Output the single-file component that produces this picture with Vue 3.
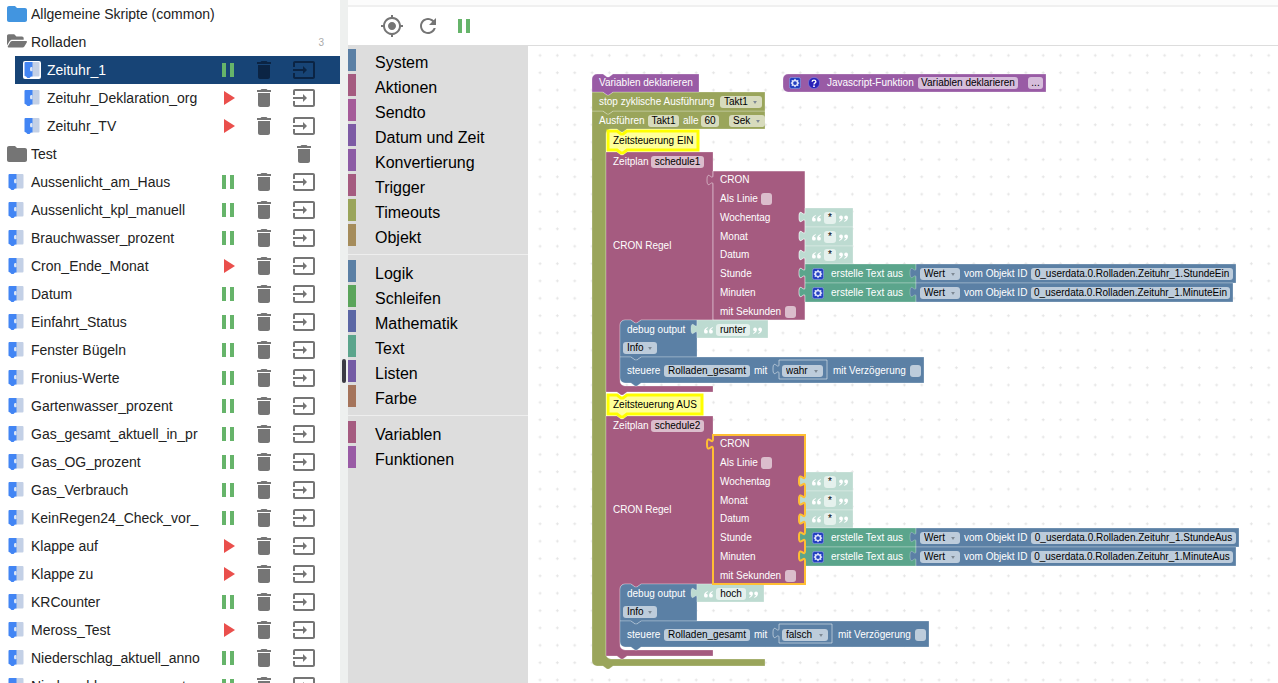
<script setup>
import { ref } from 'vue'

const ICONS = {
  pause: 'M6 19h4V5H6v14zm8-14v14h4V5h-4z',
  play: 'M8 5v14l11-7z',
  trash: 'M6 19c0 1.1.9 2 2 2h8c1.1 0 2-.9 2-2V7H6v12zM19 4h-3.5l-1-1h-5l-1 1H5v2h14V4z',
  input: 'M21 3.01H3c-1.1 0-2 .9-2 2V9h2V4.99h18v14.03H3V15H1v4.01c0 1.1.9 1.98 2 1.98h18c1.1 0 2-.88 2-1.98v-14c0-1.11-.9-2-2-2zM11 16l4-4-4-4v3H1v2h10v3z',
  folder: 'M10 4H4c-1.1 0-1.99.9-1.99 2L2 18c0 1.1.9 2 2 2h16c1.1 0 2-.9 2-2V8c0-1.1-.9-2-2-2h-8l-2-2z',
  locate: 'M12 8c-2.21 0-4 1.79-4 4s1.79 4 4 4 4-1.79 4-4-1.79-4-4-4zm8.94 3c-.46-4.17-3.77-7.48-7.94-7.94V1h-2v2.06C6.83 3.52 3.52 6.83 3.06 11H1v2h2.06c.46 4.17 3.77 7.48 7.94 7.94V23h2v-2.06c4.17-.46 7.48-3.77 7.94-7.94H23v-2h-2.06zM12 19c-3.87 0-7-3.13-7-7s3.13-7 7-7 7 3.13 7 7-3.13 7-7 7z',
  refresh: 'M17.65 6.35C16.2 4.9 14.21 4 12 4c-4.42 0-7.99 3.58-7.99 8s3.57 8 7.99 8c3.73 0 6.84-2.55 7.73-6h-2.08c-.82 2.33-3.04 4-5.65 4-3.31 0-6-2.69-6-6s2.69-6 6-6c1.66 0 3.14.69 4.22 1.78L13 11h7V4l-2.35 2.35z'
}

const selected = ref('Zeituhr_1')
const script = (name, running, nested = false) => ({ kind: 'script', name, running, nested })
const entries = [
  { kind: 'folder', name: 'Allgemeine Skripte (common)', tone: 'azure' },
  { kind: 'open', name: 'Rolladen', count: 3 },
  script('Zeituhr_1', true, true),
  script('Zeituhr_Deklaration_org', false, true),
  script('Zeituhr_TV', false, true),
  { kind: 'folder', name: 'Test', tone: 'grey', removable: true },
  script('Aussenlicht_am_Haus', true),
  script('Aussenlicht_kpl_manuell', true),
  script('Brauchwasser_prozent', true),
  script('Cron_Ende_Monat', false),
  script('Datum', true),
  script('Einfahrt_Status', true),
  script('Fenster Bügeln', true),
  script('Fronius-Werte', true),
  script('Gartenwasser_prozent', true),
  script('Gas_gesamt_aktuell_in_pr', true),
  script('Gas_OG_prozent', true),
  script('Gas_Verbrauch', true),
  script('KeinRegen24_Check_vor_', true),
  script('Klappe auf', false),
  script('Klappe zu', false),
  script('KRCounter', true),
  script('Meross_Test', false),
  script('Niederschlag_aktuell_anno', true),
  script('Niederschlag_gegenwert', true)
]

const categories = [
  [['System', '#5b80a5'], ['Aktionen', '#a55b80'], ['Sendto', '#a55b99'], ['Datum und Zeit', '#7d5ba5'],
    ['Konvertierung', '#8c5ba5'], ['Trigger', '#a55b80'], ['Timeouts', '#9aa55b'], ['Objekt', '#a58c5b']],
  [['Logik', '#5b80a5'], ['Schleifen', '#5ba55b'], ['Mathematik', '#5b67a5'], ['Text', '#5ba58c'],
    ['Listen', '#745ba5'], ['Farbe', '#a5745b']],
  [['Variablen', '#a55b80'], ['Funktionen', '#995ba5']]
]

/* Workspace scroll offset: block coordinates minus origin give canvas coordinates. */
const origin = { x: 528, y: 46 }

const BITE = 'l4,3 h2 l4,-3'
const TAB = 'l-4,3 h-2 l-4,-3'
const PLUG = 'c0,-7 -6,6 -6,-5 s6,2 6,-5'
const SOCKET = 'c0,7 -6,-6 -6,5 s6,-2 6,5'

function stack(x, y, w, h, head = false) {
  const start = head ? `M${x},${y + 5} a5,5 0 0 1 5,-5` : `M${x},${y}`
  return `${start} H${x + 11} ${BITE} H${x + w} V${y + h} H${x + 21} ${TAB} H${x} Z`
}
function last(x, y, w, h) {
  return `M${x},${y} H${x + 11} ${BITE} H${x + w} V${y + h} H${x + 21} ${TAB} H${x + 5} a5,5 0 0 1 -5,-5 Z`
}
function wrap(x, y, w, innerTop, innerEnd, end, round) {
  const i = x + 14
  const corner = round ? `H${x + 5} a5,5 0 0 1 -5,-5` : `H${x}`
  return `M${x},${y} H${x + 11} ${BITE} H${x + w} V${innerTop} H${i + 21} ${TAB} H${i + 5} a5,5 0 0 0 -5,5 ` +
    `V${innerEnd - 5} a5,5 0 0 0 5,5 H${x + w} V${end} H${x + 21} ${TAB} ${corner} Z`
}
function value(x, y, w, h) {
  return `M${x},${y} H${x + w} V${y + h} H${x} V${y + 14} ${PLUG} Z`
}
function cron(x, y, w, h) {
  const sockets = [37, 56, 75, 93, 112].map((o) => `V${y + o + 4} ${SOCKET}`).join(' ')
  return `M${x},${y} H${x + w} ${sockets} V${y + h} H${x} V${y + 14} ${PLUG} Z`
}

const OLIVE = '#9aa55b'
const PLUM = '#a55b80'
const PURPLE = '#995ba5'
const BLUE = '#5b80a5'
const GREEN = '#5ba58c'
const MINT = '#bddbd1'

function scheduleShapes(dy, o) {
  const y = (n) => n + dy
  return [
    { d: wrap(606, y(152), 107, y(320), y(386), y(392), false), fill: PLUM },
    { d: `M608,${y(131)} H617 ${BITE} H${o.note - 2} V${y(150)} H627 ${TAB} H608 Z`, fill: '#ffff99', cls: 'note' },
    { d: cron(713, y(171), 92, 149), fill: PLUM },
    ...[208, 227, 246].map((r, n) => ({ d: value(805, y(r), 48, n === 2 ? 18 : 19), fill: MINT })),
    { d: value(805, y(264), 111, 19), fill: GREEN },
    { d: value(805, y(283), 111, 19), fill: GREEN },
    { d: value(916, y(264), o.hour - 916, 19), fill: BLUE },
    { d: value(916, y(283), o.minute - 916, 19), fill: BLUE },
    { d: stack(620, y(320), 77, 37, true), fill: BLUE },
    { d: value(697, y(320), o.text - 697, 18), fill: MINT },
    { d: last(620, y(357), o.steer - 620, 26), fill: BLUE },
    { d: value(779, y(360), o.bool - 779, 19), fill: BLUE, cls: 'inset' },
    { d: cron(713, y(171), 92, 149), fill: 'none', cls: o.active ? 'active' : '' }
  ]
}

const shapes = [
  { d: wrap(592, 111, 173, 129, 659, 666, true), fill: OLIVE },
  { d: stack(592, 92, 173, 19), fill: OLIVE },
  { d: stack(592, 74, 107, 18, true), fill: PURPLE },
  { d: 'M788,74 H1046 V92 H788 a5,5 0 0 1 -5,-5 V79 a5,5 0 0 1 5,-5 Z', fill: PURPLE },
  ...scheduleShapes(0, { note: 700, hour: 1236, minute: 1233, text: 768, steer: 924, bool: 827 }),
  ...scheduleShapes(264, { note: 704, hour: 1239, minute: 1236, text: 764, steer: 929, bool: 832, active: true })
]

const label = (text, w) => ({ k: 'label', text, w })
const field = (text, w) => ({ k: 'field', text, w })
const pick = (text, w) => ({ k: 'pick', text, w })
const check = { k: 'check' }
const gear = { k: 'gear' }
const open = { k: 'open' }
const close = { k: 'close' }

function scheduleRows(dy, o) {
  const rows = [
    { x: 613, y: 141, dark: true, items: [label(o.note)] },
    { x: 613, y: 162, tone: 'plum', items: [label('Zeitplan', 34), field(o.name, 53)] },
    { x: 613, y: 246, items: [label('CRON Regel')] },
    { x: 720, y: 180, items: [label('CRON')] },
    { x: 720, y: 199, tone: 'plum', items: [label('Als Linie', 37), check] },
    { x: 720, y: 218, items: [label('Wochentag')] },
    { x: 720, y: 237, items: [label('Monat')] },
    { x: 720, y: 255, items: [label('Datum')] },
    { x: 720, y: 274, items: [label('Stunde')] },
    { x: 720, y: 293, items: [label('Minuten')] },
    { x: 720, y: 312, tone: 'plum', items: [label('mit Sekunden', 61), check] },
    ...[218, 237, 255].map((y) => ({ x: 812, y, tone: 'mint', items: [open, field('*', 12), close] })),
    { x: 812, y: 274, items: [gear, label('erstelle Text aus')] },
    { x: 812, y: 293, items: [gear, label('erstelle Text aus')] },
    { x: 920, y: 274, tone: 'blue', items: [pick('Wert', 40), label('vom Objekt ID', 63), field('0_userdata.0.Rolladen.Zeituhr_1.' + o.hour, o.hourW)] },
    { x: 920, y: 293, tone: 'blue', items: [pick('Wert', 40), label('vom Objekt ID', 63), field('0_userdata.0.Rolladen.Zeituhr_1.' + o.minute, o.minuteW)] },
    { x: 627, y: 330, items: [label('debug output')] },
    { x: 704, y: 330, tone: 'mint', items: [open, field(o.text, o.textW), close] },
    { x: 623, y: 348, tone: 'blue', items: [pick('Info', 34)] },
    { x: 627, y: 371, tone: 'blue', items: [label('steuere', 33), field('Rolladen_gesamt', 86), label('mit')] },
    { x: 782, y: 371, tone: 'blue', items: [pick(o.bool, o.boolW)] },
    { x: o.delayX, y: 371, tone: 'blue', items: [label('mit Verzögerung', 73), check] }
  ]
  return rows.map((r) => ({ ...r, y: r.y + dy }))
}

const rows = [
  { x: 599, y: 83, items: [label('Variablen deklarieren')] },
  { x: 599, y: 102, tone: 'olive', items: [label('stop zyklische Ausführung', 117), pick('Takt1', 42)] },
  { x: 599, y: 121, tone: 'olive', items: [label('Ausführen', 45), field('Takt1', 31), label('alle', 14), field('60', 18), { k: 'space' }, pick('Sek', 36)] },
  { x: 789, y: 83, tone: 'purple', items: [gear, { k: 'help' }, label('Javascript-Funktion', 87), field('Variablen deklarieren', 100), { k: 'space' }, { k: 'more' }] },
  ...scheduleRows(0, { note: 'Zeitsteuerung EIN', name: 'schedule1', hour: 'StundeEin', hourW: 202, minute: 'MinuteEin', minuteW: 199, text: 'runter', textW: 34, bool: 'wahr', boolW: 41, delayX: 833 }),
  ...scheduleRows(264, { note: 'Zeitsteuerung AUS', name: 'schedule2', hour: 'StundeAus', hourW: 205, minute: 'MinuteAus', minuteW: 202, text: 'hoch', textW: 30, bool: 'falsch', boolW: 46, delayX: 838 })
].map((row, r) => ({
  ...row,
  items: row.items.map((it, i) => ({
    ...it,
    id: `f${r}-${i}`,
    target: it.k === 'label' && row.items[i + 1] && ['field', 'pick', 'check'].includes(row.items[i + 1].k) ? `f${r}-${i + 1}` : null
  }))
}))

const place = (row) => ({ left: `${row.x - origin.x}px`, top: `${row.y - origin.y - 6}px` })
const width = (it) => (it.w ? { width: `${it.w}px` } : null)
</script>

<template>
  <div class="app">
    <nav class="tree" aria-label="Skripte">
      <ul>
        <li
          v-for="e in entries"
          :key="e.name"
          :class="{ nested: e.nested, current: e.name === selected }"
        >
          <svg v-if="e.kind === 'folder'" class="folder" :class="e.tone" viewBox="2 2 20 20"><path :d="ICONS.folder" /></svg>
          <svg v-else-if="e.kind === 'open'" class="folder grey" viewBox="0 0 576 576">
            <path d="M572.694 292.093L500.27 416.248A63.997 63.997 0 0 1 444.989 448H45.025c-18.523 0-30.064-20.093-20.731-36.093l72.424-124.155A64 64 0 0 1 152 256h399.964c18.523 0 30.064 20.093 20.73 36.093zM152 224h328v-48c0-26.51-21.49-48-48-48H272l-64-64H48C21.49 64 0 85.49 0 112v278.046l69.077-118.418C86.214 242.25 117.989 224 152 224z" />
          </svg>
          <svg v-else class="blockly" viewBox="0 0 18 18">
            <path d="M8 1h7.500a1 1 0 0 1 1 1v12.500a1 1 0 0 1-1 1H8z" fill="#c3d0e6" />
            <path d="M2.500 1H9.500V15.500H8l-1.500 1.500h-2L3 15.500l-1.500-.8V2a1 1 0 0 1 1-1z" fill="#4285f4" />
            <path d="M9.500 6.500c-2-1-2.500 0-2.500 1.700s.5 2.700 2.500 1.700z" fill="#dbe5f6" />
          </svg>
          <button class="name" type="button" @click="e.kind === 'script' && (selected = e.name)">{{ e.name }}</button>
          <span v-if="e.count" class="count">{{ e.count }}</span>
          <span v-if="e.kind === 'script'" class="actions">
            <button type="button" :aria-label="e.running ? 'Pause' : 'Start'" :class="e.running ? 'run' : 'stop'">
              <svg viewBox="0 0 24 24"><path :d="e.running ? ICONS.pause : ICONS.play" /></svg>
            </button>
            <button type="button" aria-label="Löschen"><svg viewBox="0 0 24 24"><path :d="ICONS.trash" /></svg></button>
            <button type="button" class="go" aria-label="Öffnen"><svg viewBox="0 0 24 24"><path :d="ICONS.input" /></svg></button>
          </span>
          <span v-if="e.removable" class="actions">
            <button type="button" aria-label="Löschen"><svg viewBox="0 0 24 24"><path :d="ICONS.trash" /></svg></button>
          </span>
        </li>
      </ul>
    </nav>

    <div class="splitter"><span></span></div>

    <main class="editor">
      <div class="strip"></div>
      <header class="toolbar">
        <button type="button" aria-label="Lokalisieren"><svg viewBox="0 0 24 24"><path :d="ICONS.locate" /></svg></button>
        <button type="button" aria-label="Neu starten"><svg viewBox="0 0 24 24"><path :d="ICONS.refresh" /></svg></button>
        <button type="button" aria-label="Pause" class="run"><svg viewBox="0 0 24 24"><path :d="ICONS.pause" /></svg></button>
      </header>

      <div class="work">
        <aside class="toolbox">
          <ul v-for="(group, g) in categories" :key="g">
            <li v-for="[name, color] in group" :key="name">
              <i :style="{ background: color }"></i><button type="button">{{ name }}</button>
            </li>
          </ul>
        </aside>

        <section class="canvas" aria-label="Arbeitsbereich">
          <svg class="shapes" aria-hidden="true">
            <defs>
              <pattern id="dots" x="3" y="1" width="17.35" height="17.35" patternUnits="userSpaceOnUse">
                <path d="M7.500 8.500h3M9 7v3" stroke="#e4e4e4" stroke-width="1" />
              </pattern>
            </defs>
            <rect width="100%" height="100%" fill="url(#dots)" />
            <g :transform="`translate(${-origin.x},${-origin.y})`">
              <path v-for="(s, i) in shapes" :key="i" class="shape" :class="s.cls" :d="s.d" :fill="s.fill" />
            </g>
          </svg>

          <div v-for="(row, r) in rows" :key="r" class="row" :class="[row.tone, { dark: row.dark }]" :style="place(row)">
            <template v-for="it in row.items" :key="it.id">
              <label v-if="it.k === 'label' && it.target" :for="it.target" :style="width(it)">{{ it.text }}</label>
              <span v-else-if="it.k === 'label'" class="text" :style="width(it)">{{ it.text }}</span>
              <input v-else-if="it.k === 'field'" :id="it.id" type="text" :value="it.text" :aria-label="it.text" :style="width(it)" />
              <span v-else-if="it.k === 'pick'" class="pick" :style="width(it)">
                <select :id="it.id" :aria-label="it.text"><option>{{ it.text }}</option></select>
                <svg viewBox="0 0 5 4"><path d="M0 0h5L2.500 4z" /></svg>
              </span>
              <input v-else-if="it.k === 'check'" :id="it.id" type="checkbox" />
              <svg v-else-if="it.k === 'gear'" class="mutator" viewBox="0 0 16 16">
                <rect x=".5" y=".5" width="15" height="15" rx="3" fill="#2440c0" stroke="#8f9de0" />
                <path d="M8 2l1.700 2.200 2.800-.2-.3 2.500L14 8l-1.800 1.500.3 2.500-2.800-.2L8 14l-1.700-2.200-2.800.2.300-2.500L2 8l1.800-1.500L3.500 4l2.800.2z" fill="#dfe4fb" />
                <circle cx="8" cy="8" r="2.500" fill="#2440c0" />
              </svg>
              <svg v-else-if="it.k === 'help'" class="mutator" viewBox="0 0 16 16">
                <circle cx="8" cy="8" r="7.500" fill="#2a22b8" stroke="#7f7bd8" />
                <path d="M5.500 6.200C5.500 3.400 10.500 3.400 10.500 6.200 10.500 8 8 7.800 8 10" fill="none" stroke="#fff" stroke-width="1.800" />
                <circle cx="8" cy="12.200" r="1.200" fill="#fff" />
              </svg>
              <svg v-else-if="it.k === 'open'" class="quote" viewBox="1 2 8 8">
                <path d="M4.500 3.200C2.300 3.700 1 5 1 7a1.700 1.700 0 1 0 1.800-1.700C2.900 4.500 3.600 4 4.500 3.700zM9 3.200C6.800 3.700 5.500 5 5.500 7a1.700 1.700 0 1 0 1.800-1.700C7.400 4.500 8.100 4 9 3.700z" />
              </svg>
              <svg v-else-if="it.k === 'close'" class="quote" viewBox="1 2 8 8">
                <path d="M1 8.800C3.200 8.300 4.500 7 4.500 5a1.700 1.700 0 1 0-1.800 1.700C2.600 7.500 1.900 8 1 8.300zM5.500 8.800C7.700 8.300 9 7 9 5a1.700 1.700 0 1 0-1.800 1.700C7.100 7.500 6.400 8 5.500 8.300z" />
              </svg>
              <button v-else-if="it.k === 'more'" type="button">...</button>
              <i v-else class="space"></i>
            </template>
          </div>
        </section>
      </div>
    </main>
  </div>
</template>

<style>
body {
  overflow: hidden;
}
</style>

<style scoped>
.app {
  display: flex;
  height: 100vh;
  background: #fff;
  font-family: "Liberation Sans", Arial, sans-serif;
  color: #222;
}
ul {
  list-style: none;
  margin: 0;
  padding: 0;
}
button {
  border: 0;
  padding: 0;
  background: none;
  font: inherit;
  color: inherit;
  text-align: left;
}
svg {
  display: block;
  flex: none;
}

/* script tree */
.tree {
  flex: none;
  width: 340px;
  overflow: hidden;
  font-size: 14px;
}
.tree li {
  display: flex;
  align-items: center;
  height: 28px;
  padding: 0 24px 0 7px;
}
.tree li.nested {
  margin-left: 15px;
  padding-left: 8px;
}
.tree li.current {
  background: #174476;
  color: #fff;
}
.folder {
  width: 20px;
  height: 20px;
  margin-right: 4px;
}
.azure {
  fill: #4295e0;
}
.grey {
  fill: #757575;
}
.blockly {
  width: 18px;
  height: 18px;
  margin-right: 6px;
}
.current .blockly {
  border-radius: 2px;
  background: #fff;
}
.name {
  flex: 1;
  min-width: 0;
  overflow: hidden;
  white-space: nowrap;
  line-height: 20px;
}
.count {
  margin-right: -8px;
  font-size: 10px;
  color: #aaa;
}
.actions {
  display: flex;
  gap: 12px;
  margin-left: 13px;
  fill: #757575;
}
.current .actions {
  fill: #0b2444;
}
.actions svg,
.toolbar svg {
  width: 24px;
  height: 24px;
}
.go {
  margin-left: 4px;
}
.run {
  fill: #66b46a;
}
.stop {
  fill: #ea4f4c;
}

/* splitter */
.splitter {
  display: flex;
  flex: none;
  justify-content: center;
  width: 8px;
  padding-top: 359px;
  box-sizing: border-box;
  background: #eef0ef;
}
.splitter span {
  width: 4px;
  height: 24px;
  border-radius: 2px;
  background: #3b3b44;
}

/* editor */
.editor {
  display: flex;
  flex: 1;
  flex-direction: column;
  min-width: 0;
}
.strip {
  height: 5px;
  border-bottom: 2px solid #f0f0f0;
  background: #fcfcfc;
}
.toolbar {
  display: flex;
  gap: 12px;
  padding: 7px 32px;
  border-bottom: 1px solid #ddd;
  fill: #757575;
}
.work {
  display: flex;
  flex: 1;
  min-height: 0;
}
.toolbox {
  flex: none;
  width: 180px;
  padding-top: 3px;
  box-sizing: border-box;
  background: #ddd;
  color: #000;
  font-size: 16px;
}
.toolbox ul + ul {
  margin-top: 8px;
  padding-top: 5px;
  border-top: 1px solid #eee;
}
.toolbox li {
  display: flex;
  align-items: center;
  height: 22px;
  margin-bottom: 3px;
}
.toolbox i {
  width: 8px;
  height: 22px;
  margin-right: 19px;
}
.toolbox button {
  padding-top: 6px;
  line-height: 22px;
}

/* workspace */
.canvas {
  position: relative;
  flex: 1;
  overflow: hidden;
}
.shapes {
  width: 100%;
  height: 100%;
}
.shape {
  stroke: #fff;
  stroke-opacity: 0.25;
  stroke-width: 1;
}
.note {
  stroke: #ffff00;
  stroke-opacity: 1;
  stroke-width: 3;
}
.inset {
  stroke-opacity: 0.5;
}
.active {
  stroke: #ffbe33;
  stroke-opacity: 1;
  stroke-width: 2;
}
.row {
  position: absolute;
  display: flex;
  align-items: center;
  gap: 4px;
  height: 12px;
  font-size: 10px;
  line-height: 12px;
  color: #fff;
  white-space: nowrap;
}
.dark {
  color: #000;
}
.olive {
  --field: #d7dbbd;
}
.plum {
  --field: #dbbdcc;
}
.purple {
  --field: #d6bddb;
}
.blue {
  --field: #bdccdb;
}
.mint {
  --field: #e5f1ed;
}
.row input,
.row select,
.row button {
  appearance: none;
  flex: none;
  height: 12px;
  margin: 0;
  border: 0;
  border-radius: 3px;
  box-sizing: border-box;
  background: var(--field);
  color: #000;
  font: inherit;
}
.row input[type="text"] {
  padding: 0;
  text-align: center;
}
.row input[type="checkbox"] {
  width: 11px;
  height: 12px;
}
.row button {
  width: 15px;
  text-align: center;
}
.row label,
.text {
  flex: none;
}
.pick {
  position: relative;
  flex: none;
  display: flex;
}
.row select {
  width: 100%;
  padding: 0 0 0 4px;
}
.pick svg {
  position: absolute;
  right: 5px;
  top: 5px;
  width: 4px;
  height: 3px;
  fill: #7d8894;
}
.mutator {
  width: 12px;
  height: 12px;
  margin-right: 3px;
}
.quote {
  width: 9px;
  height: 9px;
  margin-right: -1px;
  fill: #fff;
}
.quote:last-child {
  margin: 0 0 0 -1px;
}
.space {
  width: 2px;
}
</style>
